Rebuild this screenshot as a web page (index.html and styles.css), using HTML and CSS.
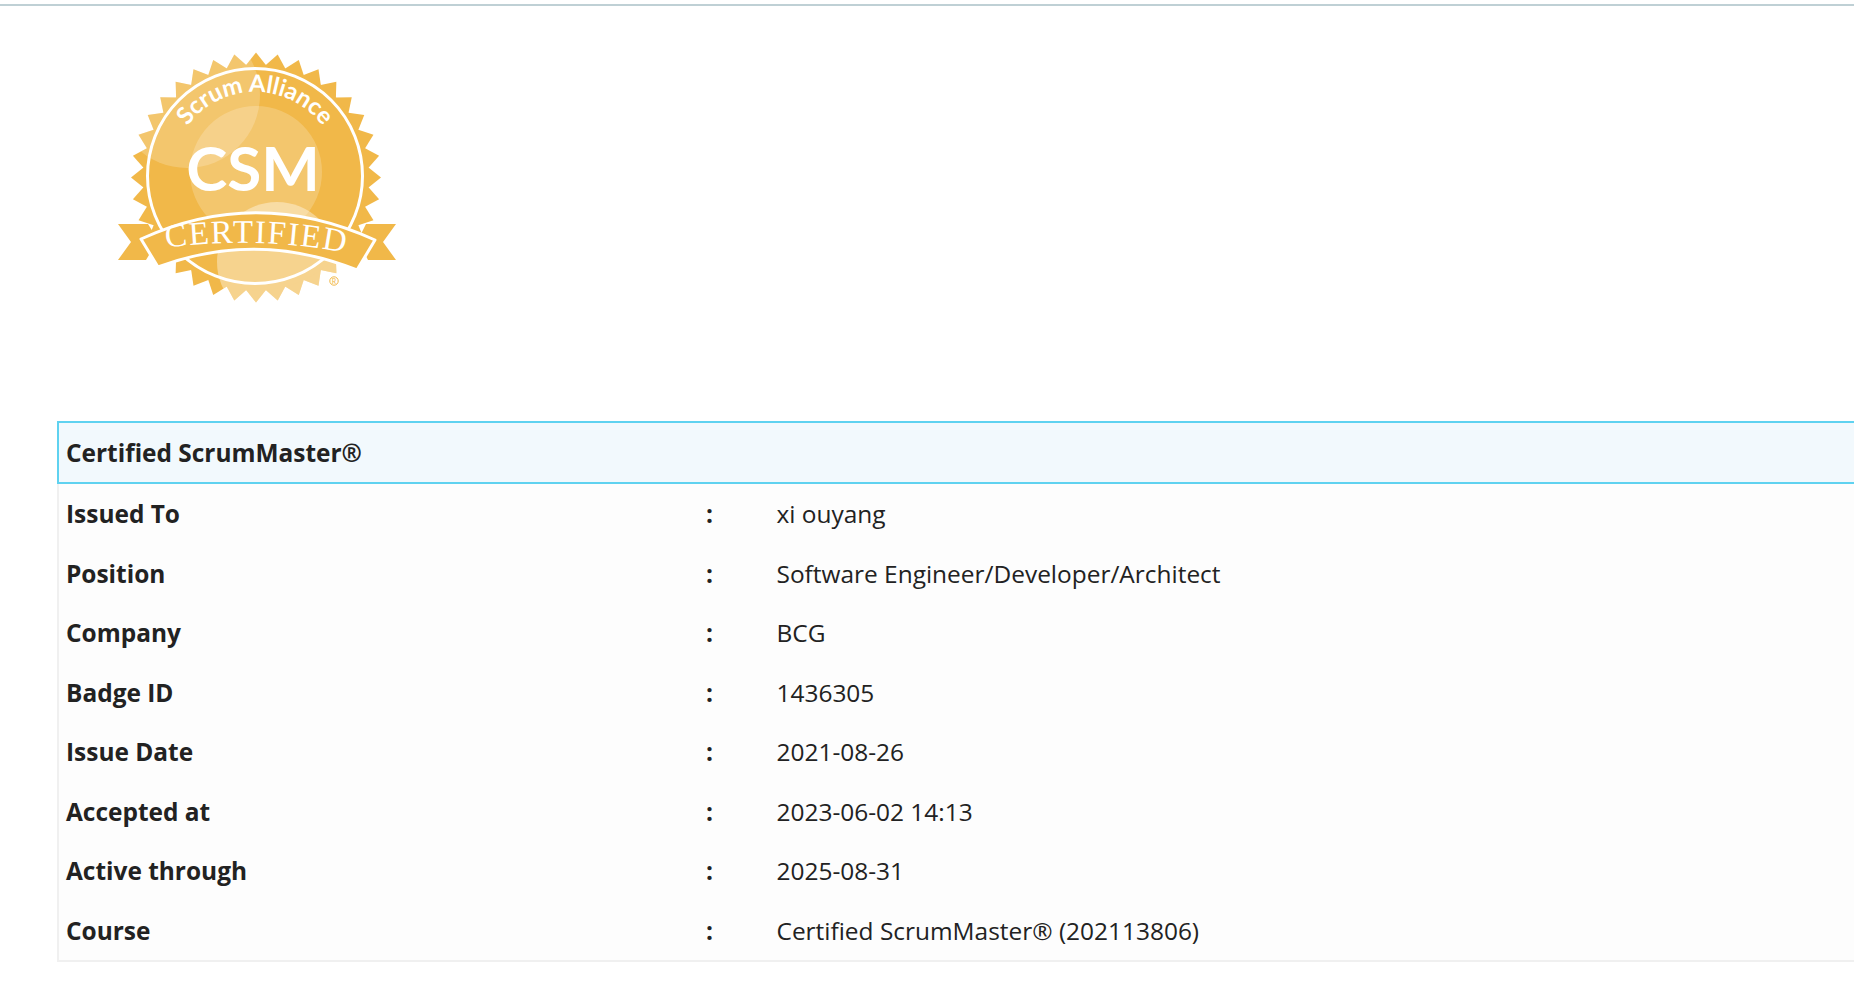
FILE: index.html
```html
<!DOCTYPE html>
<html lang="en">
<head>
<meta charset="utf-8">
<title>Certified ScrumMaster</title>
<link rel="stylesheet" href="styles.css">
</head>
<body>
<div class="topline"></div>
<div class="logo-wrap">
<svg class="logo" width="320" height="280" viewBox="0 0 320 280">
  <defs>
    <polygon id="t" points="146.1,25 156,12.5 165.9,25 156,60"/>
    <g id="t3"><use href="#t"/><use href="#t" transform="rotate(10 156 137.5)"/><use href="#t" transform="rotate(20 156 137.5)"/></g>
    <g id="t12"><use href="#t3"/><use href="#t3" transform="rotate(30 156 137.5)"/><use href="#t3" transform="rotate(60 156 137.5)"/><use href="#t3" transform="rotate(90 156 137.5)"/></g>
    <g id="seal"><use href="#t12"/><use href="#t12" transform="rotate(120 156 137.5)"/><use href="#t12" transform="rotate(240 156 137.5)"/><circle cx="156" cy="137.5" r="113"/></g>
    <mask id="seal-mask"><use href="#seal" fill="#fff"/></mask>
    <path id="arc-top" d="M71 136 A84 84 0 0 1 239 136"/>
    <path id="arc-rib" d="M50 210 Q157 193 262 216"/>
  </defs>
  <use href="#seal" class="gold"/>
  <g mask="url(#seal-mask)">
    <circle cx="87" cy="55" r="73" class="tint"/>
    <circle cx="156" cy="132" r="66" class="tint"/>
    <circle cx="177" cy="222" r="60" class="tint strong"/>
  </g>
  <circle cx="155" cy="136" r="107.5" class="ring"/>
  <text class="arc-label"><textPath href="#arc-top" startOffset="50%" text-anchor="middle">Scrum Alliance</textPath></text>
  <text x="153" y="151" text-anchor="middle" class="csm">CSM</text>
  <polygon points="18,184 48,184 58,200 46,220 18,220 31,202" class="gold"/>
  <polygon points="296,184 266,184 258,200 268,220 296,220 283,202" class="gold"/>
  <path d="M41 199 Q157 146 275 200 L257 230 Q157 190 58 227 Z" class="ribbon"/>
  <text class="rib-label"><textPath href="#arc-rib" startOffset="50%" text-anchor="middle">CERTIFIED</textPath></text>
  <circle cx="234" cy="241" r="4.2" class="reg"/>
  <text x="234" y="243.5" text-anchor="middle" class="reg-r">R</text>
</svg>
</div>
<section class="card">
  <h2 class="card-title">Certified ScrumMaster®</h2>
  <dl class="rows">
    <div class="row"><dt>Issued To</dt><span class="colon">:</span><dd>xi ouyang</dd></div>
    <div class="row"><dt>Position</dt><span class="colon">:</span><dd>Software Engineer/Developer/Architect</dd></div>
    <div class="row"><dt>Company</dt><span class="colon">:</span><dd>BCG</dd></div>
    <div class="row"><dt>Badge ID</dt><span class="colon">:</span><dd>1436305</dd></div>
    <div class="row"><dt>Issue Date</dt><span class="colon">:</span><dd>2021-08-26</dd></div>
    <div class="row"><dt>Accepted at</dt><span class="colon">:</span><dd>2023-06-02 14:13</dd></div>
    <div class="row"><dt>Active through</dt><span class="colon">:</span><dd>2025-08-31</dd></div>
    <div class="row"><dt>Course</dt><span class="colon">:</span><dd>Certified ScrumMaster® (202113806)</dd></div>
  </dl>
</section>
</body>
</html>
```
FILE: styles.css
```css
* { box-sizing: border-box; }
html, body { margin: 0; padding: 0; background: #fff; overflow: hidden; }
body { font-family: "Open Sans", sans-serif; font-size: 24.45px; color: #222; height: 1008px; }
.topline { margin-top: 4px; height: 2px; background: #bfd0d5; }
.logo-wrap { padding: 34px 0 0 100px; height: 415px; }
.logo { display: block; }
.gold { fill: #f1b849; }
.tint { fill: #fff; opacity: 0.2; }
.tint.strong { opacity: 0.38; }
.ring { fill: none; stroke: #fff; stroke-width: 3; }
.ribbon { fill: #f1b849; stroke: #fff; stroke-width: 3; stroke-linejoin: round; }
.arc-label { font-family: "Lato", sans-serif; font-weight: 700; font-size: 24px; fill: #fff; }
.csm { font-family: "Lato", sans-serif; font-weight: 700; font-size: 62px; fill: #fff; }
.rib-label { font-family: "Liberation Serif", serif; font-size: 33px; fill: #fff; letter-spacing: 1.6px; }
.reg { fill: none; stroke: #f1b849; stroke-width: 1; }
.reg-r { font-family: "Lato", sans-serif; font-size: 7px; fill: #f1b849; }
.card { margin-left: 57px; border-left: 2px solid #f0f0f0; border-bottom: 2px solid #f0f0f0; background: #fdfdfd; }
.card-title { margin: 0 0 0 -2px; height: 63px; display: flex; align-items: center; padding-left: 7px; font-size: 24.45px; font-weight: 700; background: #f2f9fd; border: 2px solid #5fd2f0; border-right: 0; color: #222; }
.rows { margin: 0; }
.row { display: grid; grid-template-columns: 640px 70.5px 1fr; height: 59.5px; align-items: center; padding-left: 7px; }
.row dt { font-weight: 700; }
.row dd { margin: 0; }
.colon { font-weight: 700; }
```
